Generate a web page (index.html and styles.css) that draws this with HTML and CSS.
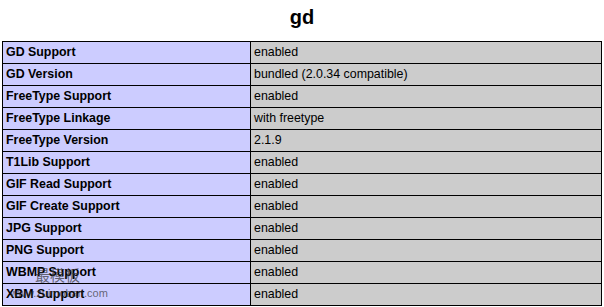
FILE: index.html
```html
<!DOCTYPE html>
<html lang="en">

<head>
  <meta charset="UTF-8" />
  <title>gd</title>
  <link rel="stylesheet" href="styles.css">
</head>

<body>
  <h2 class="title">gd</h2>
  <div class="wrap">
    <table class="info">
      <tr><td class="e">GD Support</td><td class="v">enabled</td></tr>
      <tr><td class="e">GD Version</td><td class="v">bundled (2.0.34 compatible)</td></tr>
      <tr><td class="e">FreeType Support</td><td class="v">enabled</td></tr>
      <tr><td class="e">FreeType Linkage</td><td class="v">with freetype</td></tr>
      <tr><td class="e">FreeType Version</td><td class="v">2.1.9</td></tr>
      <tr><td class="e">T1Lib Support</td><td class="v">enabled</td></tr>
      <tr><td class="e">GIF Read Support</td><td class="v">enabled</td></tr>
      <tr><td class="e">GIF Create Support</td><td class="v">enabled</td></tr>
      <tr><td class="e">JPG Support</td><td class="v">enabled</td></tr>
      <tr><td class="e">PNG Support</td><td class="v">enabled</td></tr>
      <tr><td class="e">WBMP Support</td><td class="v">enabled</td></tr>
      <tr><td class="e">XBM Support</td><td class="v">enabled</td></tr>
    </table>
    <div class="mark">
      <span class="mark-cn">最模板</span>
      <span class="mark-url">www.zuimoban.com</span>
    </div>
  </div>
</body>

</html>
```

FILE: styles.css
```css
body {
  margin: 0;
  padding: 0 2px;
  background-color: #fff;
  color: #000;
  font-family: "Liberation Sans", Arial, sans-serif;
}

.title {
  margin: 0;
  padding: 5px 0 0 0;
  height: 36px;
  text-align: center;
  font-size: 20px;
  line-height: 24px;
  font-weight: bold;
}

.wrap {
  position: relative;
}

.info {
  width: 600px;
  border-collapse: collapse;
}

.info td {
  border: 1px solid #000;
  padding: 4px 3px;
  font-size: 12.4px;
  line-height: 13px;
  vertical-align: baseline;
}

.e {
  width: 241px;
  background-color: #ccccff;
  font-weight: bold;
  color: #000;
}

.v {
  background-color: #cccccc;
  color: #000;
}

/* site stamp over the last rows */
.mark {
  position: absolute;
  left: 2px;
  top: 222px;
  color: rgba(50, 50, 50, 0.7);
  pointer-events: none;
}

.mark-cn {
  position: absolute;
  left: 31px;
  top: 1px;
  font-family: "Noto Sans CJK SC", sans-serif;
  font-size: 15px;
  white-space: nowrap;
}

.mark-url {
  position: absolute;
  left: 6px;
  top: 24px;
  font-size: 11px;
  white-space: nowrap;
}
```
